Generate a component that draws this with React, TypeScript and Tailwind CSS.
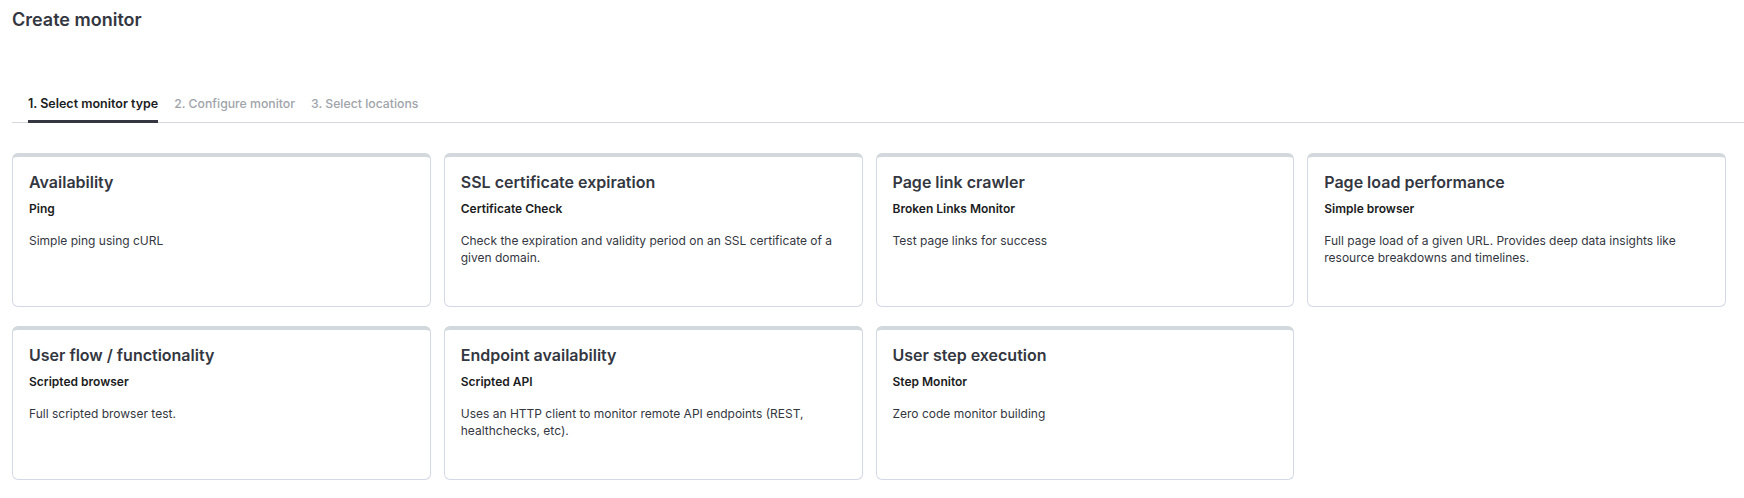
import { useState } from "react";

type MonitorType = {
    id: string;
    title: string;
    label: string;
    description: string;
};

const monitorTypes: MonitorType[] = [
    { id: 'http', title: 'Availability', label: 'Ping', description: 'Simple ping using cURL' },
    { id: 'ssl', title: 'SSL certificate expiration', label: 'Certificate Check', description: 'Check the expiration and validity period on an SSL certificate of a given domain.' },
    { id: 'links', title: 'Page link crawler', label: 'Broken Links Monitor', description: 'Test page links for success' },
    { id: 'browser', title: 'Page load performance', label: 'Simple browser', description: 'Full page load of a given URL. Provides deep data insights like resource breakdowns and timelines.' },
    { id: 'scripted', title: 'User flow / functionality', label: 'Scripted browser', description: 'Full scripted browser test.' },
    { id: 'api', title: 'Endpoint availability', label: 'Scripted API', description: 'Uses an HTTP client to monitor remote API endpoints (REST, healthchecks, etc).' },
    { id: 'step', title: 'User step execution', label: 'Step Monitor', description: 'Zero code monitor building' },
];

const steps = ['1. Select monitor type', '2. Configure monitor', '3. Select locations'];

function MonitorCard({ type, onSelect }: { type: MonitorType; onSelect: (id: string) => void }) {
    return (
        <button
            type="button"
            className="h-[154px] text-left flex flex-col px-4 pt-[13px] bg-white border border-[#d3dae6] border-t-4 border-t-[#d3d8dc] rounded-md cursor-pointer"
            onClick={() => onSelect(type.id)}
        >
            <h2 className="text-base leading-6 font-semibold text-[#343741]">{type.title}</h2>
            <h3 className="mt-[7px] text-xs leading-4 font-semibold text-[#1a1c21]">{type.label}</h3>
            <p className="mt-4 text-xs leading-[16.5px] text-[#343741]">{type.description}</p>
        </button>
    );
}

export default function App() {
    const [activeStep] = useState<number>(0);
    const [, setSelected] = useState<string>('');

    return (
        <div className="min-h-screen bg-white font-['Inter','Liberation_Sans',sans-serif] text-[#343741]">
            <h1 className="px-3 pt-1.5 text-lg leading-7 font-semibold text-[#343741]">Create monitor</h1>
            <div className="mt-[62px] ml-3 flex gap-4 pl-4 border-b border-[#d3d6da]">
                {steps.map((step, i) => (
                    <div
                        key={step}
                        className={
                            i === activeStep
                                ? "pb-2 -mb-px text-[12.5px] leading-4 font-semibold text-[#1a1c21] border-b-[3px] border-[#343741]"
                                : "pb-2 -mb-px text-[12.25px] leading-4 font-medium text-[#a0a4aa] border-b-[3px] border-transparent"
                        }
                    >
                        {step}
                    </div>
                ))}
            </div>
            <main className="mt-[30px] pl-3 pr-[18px] grid grid-cols-4 gap-x-[13px] gap-y-[19px]">
                {monitorTypes.map((t) => (
                    <MonitorCard key={t.id} type={t} onSelect={setSelected} />
                ))}
            </main>
        </div>
    );
}
